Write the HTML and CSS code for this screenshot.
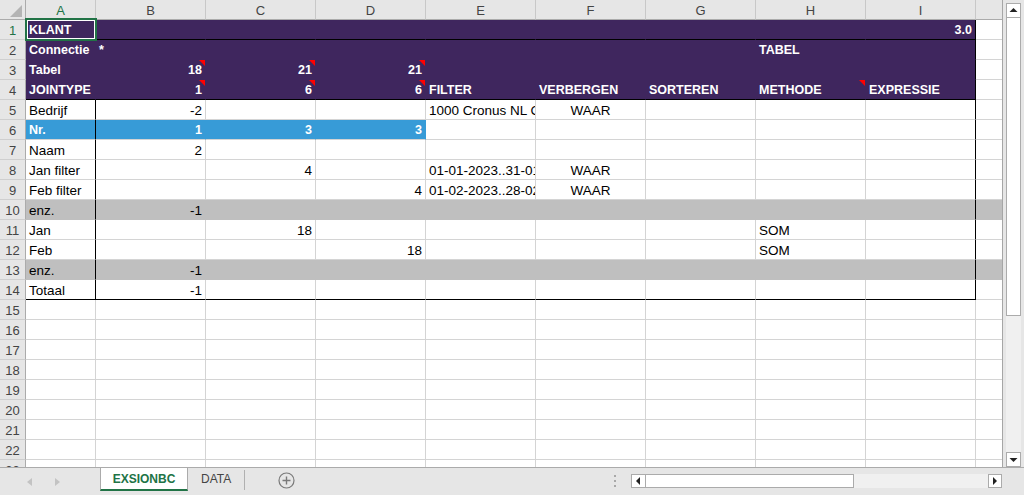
FILE: index.html
```html
<!DOCTYPE html>
<html lang="nl">
<head>
    <meta charset="UTF-8">
    <title>EXSIONBC</title>
    <link rel="stylesheet" href="styles.css">
</head>
<body>
    <div class="main">
        <!-- Worksheet grid -->
        <div class="sheet">
            <div class="row head">
                <div class="c corner"><svg width="26" height="20" viewBox="0 0 26 20"><polygon points="22,5 22,17 10,17" fill="#b4b4b4"/></svg></div>
                <div class="c sel">A</div><div class="c">B</div><div class="c">C</div><div class="c">D</div><div class="c">E</div><div class="c">F</div><div class="c">G</div><div class="c">H</div><div class="c">I</div><div class="c j"></div>
            </div>
            <div class="row">
                <div class="c rh sel">1</div>
                <div class="c p bb">KLANT</div><div class="c p bb"></div><div class="c p bb"></div><div class="c p bb"></div><div class="c p bb"></div><div class="c p bb"></div><div class="c p bb"></div><div class="c p bb"></div><div class="c p bb br r">3.0</div><div class="c j"></div>
            </div>
            <div class="row">
                <div class="c rh">2</div>
                <div class="c p">Connectie</div><div class="c p">*</div><div class="c p"></div><div class="c p"></div><div class="c p"></div><div class="c p"></div><div class="c p"></div><div class="c p">TABEL</div><div class="c p br"></div><div class="c j"></div>
            </div>
            <div class="row">
                <div class="c rh">3</div>
                <div class="c p">Tabel</div><div class="c p r n">18</div><div class="c p r n">21</div><div class="c p r n">21</div><div class="c p"></div><div class="c p"></div><div class="c p"></div><div class="c p"></div><div class="c p br"></div><div class="c j"></div>
            </div>
            <div class="row">
                <div class="c rh">4</div>
                <div class="c p bb">JOINTYPE</div><div class="c p bb r n">1</div><div class="c p bb r n">6</div><div class="c p bb r n">6</div><div class="c p bb">FILTER</div><div class="c p bb">VERBERGEN</div><div class="c p bb">SORTEREN</div><div class="c p bb n">METHODE</div><div class="c p bb br">EXPRESSIE</div><div class="c j"></div>
            </div>
            <div class="row">
                <div class="c rh">5</div>
                <div class="c br">Bedrijf</div><div class="c r">-2</div><div class="c"></div><div class="c"></div><div class="c">1000 Cronus NL Ge</div><div class="c ctr">WAAR</div><div class="c"></div><div class="c"></div><div class="c br"></div><div class="c j"></div>
            </div>
            <div class="row">
                <div class="c rh">6</div>
                <div class="c b br">Nr.</div><div class="c b r">1</div><div class="c b r">3</div><div class="c b r">3</div><div class="c"></div><div class="c"></div><div class="c"></div><div class="c"></div><div class="c br"></div><div class="c j"></div>
            </div>
            <div class="row">
                <div class="c rh">7</div>
                <div class="c br">Naam</div><div class="c r">2</div><div class="c"></div><div class="c"></div><div class="c"></div><div class="c"></div><div class="c"></div><div class="c"></div><div class="c br"></div><div class="c j"></div>
            </div>
            <div class="row">
                <div class="c rh">8</div>
                <div class="c br">Jan filter</div><div class="c"></div><div class="c r">4</div><div class="c"></div><div class="c">01-01-2023..31-01</div><div class="c ctr">WAAR</div><div class="c"></div><div class="c"></div><div class="c br"></div><div class="c j"></div>
            </div>
            <div class="row">
                <div class="c rh">9</div>
                <div class="c br">Feb filter</div><div class="c"></div><div class="c"></div><div class="c r">4</div><div class="c">01-02-2023..28-02</div><div class="c ctr">WAAR</div><div class="c"></div><div class="c"></div><div class="c br"></div><div class="c j"></div>
            </div>
            <div class="row">
                <div class="c rh">10</div>
                <div class="c g br">enz.</div><div class="c g r">-1</div><div class="c g"></div><div class="c g"></div><div class="c g"></div><div class="c g"></div><div class="c g"></div><div class="c g"></div><div class="c g br"></div><div class="c g j"></div>
            </div>
            <div class="row">
                <div class="c rh">11</div>
                <div class="c br">Jan</div><div class="c"></div><div class="c r">18</div><div class="c"></div><div class="c"></div><div class="c"></div><div class="c"></div><div class="c">SOM</div><div class="c br"></div><div class="c j"></div>
            </div>
            <div class="row">
                <div class="c rh">12</div>
                <div class="c br">Feb</div><div class="c"></div><div class="c"></div><div class="c r">18</div><div class="c"></div><div class="c"></div><div class="c"></div><div class="c">SOM</div><div class="c br"></div><div class="c j"></div>
            </div>
            <div class="row">
                <div class="c rh">13</div>
                <div class="c g br">enz.</div><div class="c g r">-1</div><div class="c g"></div><div class="c g"></div><div class="c g"></div><div class="c g"></div><div class="c g"></div><div class="c g"></div><div class="c g br"></div><div class="c g j"></div>
            </div>
            <div class="row">
                <div class="c rh">14</div>
                <div class="c bb br">Totaal</div><div class="c bb r">-1</div><div class="c bb"></div><div class="c bb"></div><div class="c bb"></div><div class="c bb"></div><div class="c bb"></div><div class="c bb"></div><div class="c bb br"></div><div class="c j"></div>
            </div>
            <div class="row"><div class="c rh">15</div><div class="c"></div><div class="c"></div><div class="c"></div><div class="c"></div><div class="c"></div><div class="c"></div><div class="c"></div><div class="c"></div><div class="c"></div><div class="c j"></div></div>
            <div class="row"><div class="c rh">16</div><div class="c"></div><div class="c"></div><div class="c"></div><div class="c"></div><div class="c"></div><div class="c"></div><div class="c"></div><div class="c"></div><div class="c"></div><div class="c j"></div></div>
            <div class="row"><div class="c rh">17</div><div class="c"></div><div class="c"></div><div class="c"></div><div class="c"></div><div class="c"></div><div class="c"></div><div class="c"></div><div class="c"></div><div class="c"></div><div class="c j"></div></div>
            <div class="row"><div class="c rh">18</div><div class="c"></div><div class="c"></div><div class="c"></div><div class="c"></div><div class="c"></div><div class="c"></div><div class="c"></div><div class="c"></div><div class="c"></div><div class="c j"></div></div>
            <div class="row"><div class="c rh">19</div><div class="c"></div><div class="c"></div><div class="c"></div><div class="c"></div><div class="c"></div><div class="c"></div><div class="c"></div><div class="c"></div><div class="c"></div><div class="c j"></div></div>
            <div class="row"><div class="c rh">20</div><div class="c"></div><div class="c"></div><div class="c"></div><div class="c"></div><div class="c"></div><div class="c"></div><div class="c"></div><div class="c"></div><div class="c"></div><div class="c j"></div></div>
            <div class="row"><div class="c rh">21</div><div class="c"></div><div class="c"></div><div class="c"></div><div class="c"></div><div class="c"></div><div class="c"></div><div class="c"></div><div class="c"></div><div class="c"></div><div class="c j"></div></div>
            <div class="row"><div class="c rh">22</div><div class="c"></div><div class="c"></div><div class="c"></div><div class="c"></div><div class="c"></div><div class="c"></div><div class="c"></div><div class="c"></div><div class="c"></div><div class="c j"></div></div>
            <div class="row"><div class="c rh">23</div><div class="c"></div><div class="c"></div><div class="c"></div><div class="c"></div><div class="c"></div><div class="c"></div><div class="c"></div><div class="c"></div><div class="c"></div><div class="c j"></div></div>

            <!-- active cell A1 -->
            <div class="cursor"></div>
        </div>

        <!-- Vertical scrollbar -->
        <div class="vscroll">
            <div class="sbtn"><svg width="13" height="13" viewBox="0 0 13 13"><polygon points="2.5,8 10.5,8 6.5,4" fill="#222"/></svg></div>
            <div class="vthumb"></div>
            <div class="vtrack"></div>
            <div class="sbtn"><svg width="13" height="13" viewBox="0 0 13 13"><polygon points="2.5,5 10.5,5 6.5,9" fill="#222"/></svg></div>
        </div>
    </div>

    <!-- Sheet tabs and horizontal scrollbar -->
    <div class="tabbar">
        <div class="tabnav">
            <svg width="5" height="8" viewBox="0 0 5 8"><polygon points="5,0 5,8 0,4" fill="#c3c3c3"/></svg>
            <svg width="5" height="8" viewBox="0 0 5 8"><polygon points="0,0 0,8 5,4" fill="#c3c3c3"/></svg>
        </div>
        <div class="tab active">EXSIONBC</div>
        <div class="tab">DATA</div>
        <div class="tabsep"></div>
        <div class="addsheet">
            <svg width="17" height="17" viewBox="0 0 17 17"><circle cx="8.5" cy="8.5" r="7.5" fill="none" stroke="#7a7a7a" stroke-width="1.2"/><path d="M8.5 4.5v8M4.5 8.5h8" stroke="#7a7a7a" stroke-width="1.4"/></svg>
        </div>
        <div class="spacer"></div>
        <div class="grip"><span></span><span></span><span></span></div>
        <div class="hscroll">
            <div class="hbtn"><svg width="13" height="12" viewBox="0 0 13 12"><polygon points="8,2 8,10 4,6" fill="#222"/></svg></div>
            <div class="hthumb"></div>
            <div class="htrack"></div>
            <div class="hbtn"><svg width="12" height="12" viewBox="0 0 12 12"><polygon points="4,2 4,10 8,6" fill="#222"/></svg></div>
        </div>
    </div>
</body>
</html>
```

FILE: styles.css
```css
* {
    margin: 0;
    padding: 0;
    box-sizing: border-box;
}

body {
    font-family: "Liberation Sans", Arial, sans-serif;
    background-color: #fff;
    color: #000;
    width: 1024px;
    height: 495px;
    overflow: hidden;
}

.main {
    display: flex;
    height: 467px;
}

/* Grid */
.sheet {
    position: relative;
    width: 1003px;
    height: 467px;
    overflow: hidden;
    border-right: 1px solid #a6a6a6;
}

.row {
    display: grid;
    grid-template-columns: 26px 70px repeat(8, 110px) 26px;
    height: 20px;
}

.c {
    border-right: 1px solid #d4d4d4;
    border-bottom: 1px solid #d4d4d4;
    padding: 0 3px;
    font-size: 13.5px;
    line-height: 21px;
    white-space: nowrap;
    overflow: hidden;
}

.j {
    border-right: 0;
}

.head .c {
    background-color: #e6e6e6;
    color: #444;
    text-align: center;
    font-size: 13px;
    border-right-color: #c8c8c8;
    border-bottom-color: #ababab;
}

.head .corner {
    padding: 0;
    border-right-color: #ababab;
}

.corner svg {
    display: block;
}

.rh {
    background-color: #e6e6e6;
    color: #444;
    text-align: center;
    font-size: 13px;
    padding: 0;
    border-right-color: #ababab;
    border-bottom-color: #cfcfcf;
}

.head .sel,
.rh.sel {
    color: #217346;
}

.r {
    text-align: right;
}

.ctr {
    text-align: center;
}

/* Cell fills */
.p {
    background-color: #3f265e;
    border-color: #3f265e;
    color: #fff;
    font-weight: bold;
    font-size: 12.5px;
}

.b {
    background-color: #379bd7;
    border-right-color: #379bd7;
    color: #fff;
    font-weight: bold;
    font-size: 12.5px;
}

.g {
    background-color: #bfbfbf;
    border-color: #bfbfbf;
}

/* Cell borders */
.bb {
    border-bottom-color: #000;
}

.br {
    border-right-color: #000;
}

/* Comment marker */
.n {
    position: relative;
}

.n::after {
    content: "";
    position: absolute;
    top: 0;
    right: 0;
    border-style: solid;
    border-width: 0 6px 6px 0;
    border-color: transparent #ff0000 transparent transparent;
}

.cursor {
    position: absolute;
    left: 25px;
    top: 18px;
    width: 72px;
    height: 23px;
    border: 2px solid #217346;
    box-shadow: inset 0 0 0 1px #fff;
}

/* Vertical scrollbar */
.vscroll {
    width: 21px;
    display: flex;
    flex-direction: column;
    padding: 3px 3px 0 3px;
    background-color: #e6e6e6;
}

.sbtn {
    height: 15px;
    background-color: #fff;
    border: 1px solid #ababab;
}

.sbtn svg,
.hbtn svg {
    display: block;
}

.vthumb {
    height: 298px;
    background-color: #fff;
    border: 1px solid #ababab;
    border-top: 0;
}

.vtrack {
    flex: 1;
    background-color: #f0f0f0;
}

/* Tab bar */
.tabbar {
    display: flex;
    align-items: flex-start;
    height: 28px;
    background-color: #e6e6e6;
    border-top: 1px solid #ababab;
}

.tabnav {
    width: 100px;
    display: flex;
    gap: 23px;
    padding: 10px 0 0 27px;
}

.tabnav svg {
    display: block;
}

.tab {
    padding: 0 13px;
    height: 22px;
    line-height: 23px;
    font-size: 12px;
    color: #444;
}

.tab.active {
    width: 88px;
    padding: 0;
    height: 23px;
    text-align: center;
    font-weight: bold;
    color: #217346;
    background-color: #fff;
    border-left: 1px solid #ababab;
    border-right: 1px solid #ababab;
    border-bottom: 2px solid #217346;
}

.tabsep {
    width: 1px;
    height: 20px;
    margin-top: 2px;
    background-color: #b0b0b0;
}

.addsheet {
    margin: 4px 0 0 33px;
}

.addsheet svg {
    display: block;
}

.spacer {
    flex: 1;
}

.grip {
    display: flex;
    flex-direction: column;
    gap: 3px;
    margin: 7px 15px 0 0;
}

.grip span {
    width: 2px;
    height: 2px;
    background-color: #a8a8a8;
}

.hscroll {
    display: flex;
    width: 371px;
    height: 14px;
    margin: 6px 22px 0 0;
}

.hbtn {
    width: 15px;
    height: 14px;
    background-color: #fff;
    border: 1px solid #ababab;
}

.hbtn:last-child {
    width: 14px;
}

.hthumb {
    width: 208px;
    background-color: #fff;
    border: 1px solid #ababab;
    border-left: 0;
}

.htrack {
    flex: 1;
    background-color: #f0f0f0;
}
```
